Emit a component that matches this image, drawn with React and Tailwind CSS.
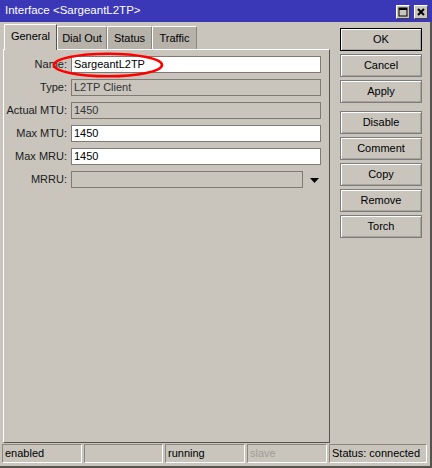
import React from 'react';

const fields = [
  { label: 'Name:', value: 'SargeantL2TP', editable: true },
  { label: 'Type:', value: 'L2TP Client', editable: false },
  { label: 'Actual MTU:', value: '1450', editable: false },
  { label: 'Max MTU:', value: '1450', editable: true },
  { label: 'Max MRU:', value: '1450', editable: true },
];

const tabs = [
  { name: 'Dial Out', w: 'w-[50px]' },
  { name: 'Status', w: 'w-[45px]' },
  { name: 'Traffic', w: 'w-[45px]' },
];

const Btn = ({ children, primary, className = '' }) => (
  <div
    className={`w-[82px] h-[23px] flex items-center justify-center border ${
      primary ? 'border-black' : 'border-[#7c7c7c]'
    } shadow-[inset_1px_1px_0_#ffffff,inset_-1px_-1px_0_#a8a49c] ${className}`}
  >
    {children}
  </div>
);

const StatusBox = ({ children, w, muted }) => (
  <div
    className={`${w} h-[19px] flex items-center pl-[2px] border border-t-[#8a877f] border-l-[#8a877f] border-b-white border-r-white ${
      muted ? 'text-[#a19d95]' : 'text-black'
    }`}
  >
    {children}
  </div>
);

const App = () => {
  return (
    <div className="relative w-[432px] h-[468px] bg-[#c9c5bd] flex flex-col text-[11px] text-black font-['Liberation_Sans',Arial,sans-serif] overflow-hidden">
      {/* title bar */}
      <div className="h-[22px] bg-[#3b38b8] flex items-center justify-between pl-[5px] pr-[4px] shrink-0">
        <span className="text-white text-[11.5px]">Interface &lt;SargeantL2TP&gt;</span>
        <div className="flex gap-[4px] mt-[2px]">
          <div className="w-[14px] h-[14px] bg-[#c9c5bd] border border-t-white border-l-white border-b-[#404040] border-r-[#404040] flex items-center justify-center">
            <svg width="10" height="10" viewBox="0 0 10 10">
              <rect x="1" y="1" width="8" height="8" fill="none" stroke="#000" strokeWidth="1" />
              <rect x="1" y="1" width="8" height="2" fill="#000" />
            </svg>
          </div>
          <div className="w-[14px] h-[14px] bg-[#c9c5bd] border border-t-white border-l-white border-b-[#404040] border-r-[#404040] flex items-center justify-center">
            <svg width="10" height="10" viewBox="0 0 10 10">
              <path d="M2 2 L8 8 M8 2 L2 8" stroke="#000" strokeWidth="2" />
            </svg>
          </div>
        </div>
      </div>

      {/* body */}
      <div className="flex-1 flex flex-col border-r-2 border-b-2 border-[#55534e]">
        <div className="flex flex-1">
          {/* left: tabs + panel */}
          <div className="ml-[3px] w-[327px] flex flex-col">
            <div className="h-[27px] flex items-end">
              <div className="ml-[1px] w-[53px] h-[26px] -mb-[1px] z-10 bg-[#c9c5bd] border-t border-l border-white border-r border-r-[#55534e] flex items-center justify-center pb-[2px]">
                General
              </div>
              {tabs.map((t) => (
                <div
                  key={t.name}
                  className={`${t.w} h-[23px] bg-[#b6b2aa] border-t border-l border-white border-r border-r-[#8a877f] flex items-center justify-center`}
                >
                  {t.name}
                </div>
              ))}
            </div>
            <div className="h-[394px] border-t border-l border-white border-r border-b border-r-[#55534e] border-b-[#55534e] pt-[6px] flex flex-col gap-[6px]">
              {fields.map((f) => (
                <div key={f.label} className="flex items-center h-[17px]">
                  <div className="w-[64px] text-right pr-[1px] text-[#202020]">{f.label}</div>
                  <div
                    className={`ml-[3px] w-[250px] h-[17px] border border-[#7e7b75] flex items-center pl-[2px] ${
                      f.editable ? 'bg-white' : 'bg-[#c9c5bd] text-[#333]'
                    }`}
                  >
                    {f.value}
                  </div>
                </div>
              ))}
              <div className="flex items-center h-[17px]">
                <div className="w-[64px] text-right pr-[1px] text-[#202020]">MRRU:</div>
                <div className="ml-[3px] w-[232px] h-[17px] border border-[#7e7b75] bg-[#c9c5bd]" />
                <svg className="ml-[7px] mt-[1px]" width="9" height="5" viewBox="0 0 9 5">
                  <path d="M0 0 L9 0 L4.5 5 Z" fill="#000" />
                </svg>
              </div>
            </div>
          </div>

          {/* right: buttons */}
          <div className="ml-[10px] pt-[6px] flex flex-col gap-[3px]">
            <Btn primary>OK</Btn>
            <Btn>Cancel</Btn>
            <Btn>Apply</Btn>
            <Btn className="mt-[5px]">Disable</Btn>
            <Btn>Comment</Btn>
            <Btn>Copy</Btn>
            <Btn>Remove</Btn>
            <Btn>Torch</Btn>
          </div>
        </div>

        {/* status bar */}
        <div className="h-[23px] flex items-start pt-[1px] pl-[2px] gap-[2px]">
          <StatusBox w="w-[80px]">enabled</StatusBox>
          <StatusBox w="w-[79px]"></StatusBox>
          <StatusBox w="w-[80px]">running</StatusBox>
          <StatusBox w="w-[80px]" muted>slave</StatusBox>
          <StatusBox w="w-[98px]">Status: connected</StatusBox>
        </div>
      </div>

      {/* red highlight drawn over the Name field */}
      <svg className="absolute left-[52px] top-[52px] pointer-events-none" width="112" height="26" viewBox="0 0 112 26">
        <ellipse cx="56" cy="13" rx="54" ry="11.3" fill="none" stroke="#ff0000" strokeWidth="2.6" />
      </svg>
    </div>
  );
};

export default App;
